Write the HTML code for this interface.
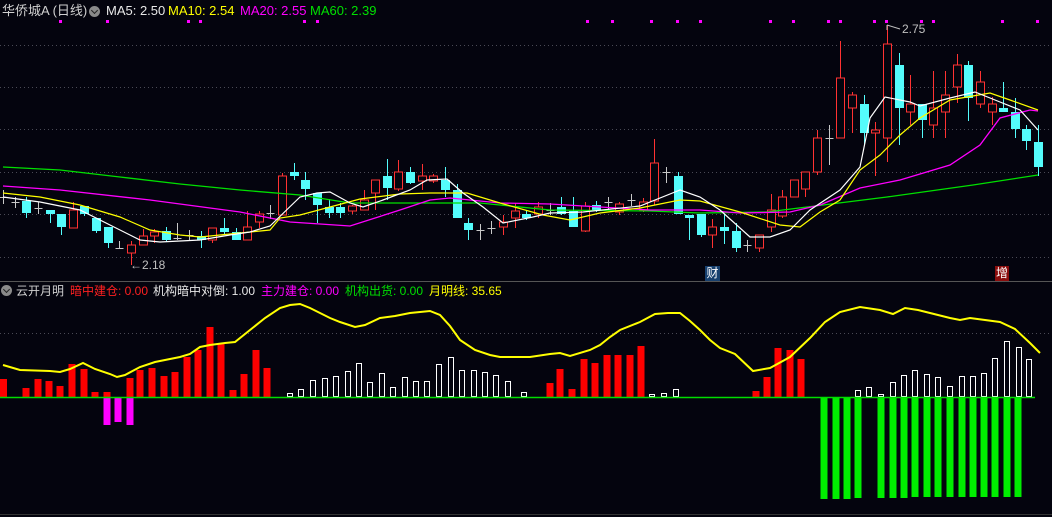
<!DOCTYPE html>
<html><head><meta charset="utf-8">
<style>
html,body{margin:0;padding:0;background:#04040e;}
body{width:1052px;height:517px;overflow:hidden;position:relative;font-family:"Liberation Sans","Noto Sans CJK SC",sans-serif;}
svg{position:absolute;left:0;top:0;}
.t{position:absolute;white-space:nowrap;font-size:13px;line-height:16px;}
.ic{position:absolute;width:11px;height:11px;border-radius:50%;background:#8a8a8a;}
.ic:after{content:"";position:absolute;left:3px;top:2px;width:4px;height:4px;border-right:1.5px solid #222;border-bottom:1.5px solid #222;transform:rotate(45deg);}
</style></head><body>
<svg id="s" width="1052" height="517" xmlns="http://www.w3.org/2000/svg"></svg>
<div class="t" style="left:2px;top:3px;color:#d0d0d0">华侨城A (日线)</div>
<div class="ic" style="left:89px;top:6px"></div>
<div class="t" style="left:106px;top:3px;color:#e8e8e8">MA5: 2.50</div>
<div class="t" style="left:168px;top:3px;color:#ffff00">MA10: 2.54</div>
<div class="t" style="left:240px;top:3px;color:#ff00ff">MA20: 2.55</div>
<div class="t" style="left:310px;top:3px;color:#00e000">MA60: 2.39</div>

<div class="ic" style="left:1px;top:285px"></div>
<div class="t" style="left:16px;top:283px;font-size:12px;color:#d0d0d0">云开月明</div>
<div class="t" style="left:70px;top:283px;font-size:12px;color:#ff2020">暗中建仓: 0.00</div>
<div class="t" style="left:153px;top:283px;font-size:12px;color:#e8e8e8">机构暗中对倒: 1.00</div>
<div class="t" style="left:261px;top:283px;font-size:12px;color:#ff00ff">主力建仓: 0.00</div>
<div class="t" style="left:345px;top:283px;font-size:12px;color:#00e000">机构出货: 0.00</div>
<div class="t" style="left:429px;top:283px;font-size:12px;color:#ffff00">月明线: 35.65</div>

<div class="t" style="left:130px;top:257px;font-size:12px;color:#c0c0c0">←2.18</div>
<div class="t" style="left:902px;top:21px;font-size:12px;color:#c0c0c0">2.75</div>
<div class="t" style="left:705px;top:266px;width:15px;height:15px;font-size:12px;line-height:15px;text-align:center;background:#17406e;color:#fff">财</div>
<div class="t" style="left:995px;top:266px;width:14px;height:15px;font-size:12px;line-height:15px;text-align:center;background:#8a0d0d;color:#fff">增</div>
<script>
var s=document.getElementById('s'),h='';
function ln(x1,y1,x2,y2,c,w,d){h+='<line x1="'+x1+'" y1="'+y1+'" x2="'+x2+'" y2="'+y2+'" stroke="'+c+'" stroke-width="'+(w||1)+'"'+(d?' stroke-dasharray="'+d+'"':'')+'/>';}
function rc(x,y,w,hh,f,st){h+='<rect x="'+x+'" y="'+y+'" width="'+w+'" height="'+hh+'" fill="'+f+'"'+(st?' stroke="'+st+'" stroke-width="1"':'')+'/>';}
function pl(p,c,w){h+='<polyline fill="none" stroke="'+c+'" stroke-width="'+(w||1)+'" points="'+p+'"/>';}
[45,87,129,172,214,257,333].forEach(function(y){ln(0,y+.5,1052,y+.5,'#4a4a55',1,'1 3');});
ln(0,281.5,1052,281.5,'#555',1);
ln(0,514.5,1052,514.5,'#333',1);
[60,107,188,200,304,317,587,612,651,677,700,770,793,828,840,874,886,921,933,1002,1037].forEach(function(x){rc(x-1,20,3,3,'#ff00ff');});
var C=[['g',197,197,190,204],['g',202,202,197,208],['c',201,213,197,218],['g',208,208,202,214],['c',210,214,210,223],['c',214,227,214,235],['r',210,228,202,228],['c',206,214,206,216],['c',218,231,218,233],['c',227,243,227,248],['g',248,248,241,248],['r',245,253,241,265],['r',236,245,229,245],['r',232,236,229,243],['c',231,240,227,242],['g',238,238,223,240],['g',235,235,230,240],['c',236,240,231,248],['r',228,240,228,243],['c',228,232,218,235],['c',232,240,228,240],['r',227,240,211,240],['r',214,222,211,228],['g',213,213,205,219],['r',176,215,173,215],['c',172,176,163,180],['c',180,189,172,200],['c',193,205,193,223],['c',207,213,199,218],['c',207,213,203,218],['r',206,211,205,214],['r',200,210,190,210],['r',180,193,180,210],['c',176,188,159,200],['r',172,189,160,191],['c',172,183,167,184],['r',176,181,164,190],['r',176,181,174,183],['c',180,190,167,197],['c',190,218,184,218],['c',223,230,218,240],['g',230,230,224,240],['g',228,228,221,234],['r',222,227,215,235],['r',211,218,203,228],['c',214,218,210,220],['r',207,214,202,218],['g',210,210,203,215],['c',207,214,197,215],['c',211,227,197,227],['r',206,231,202,232],['c',205,210,201,212],['g',202,202,197,210],['r',204,212,202,215],['g',200,200,194,206],['r',202,210,198,212],['r',163,201,139,205],['g',172,172,167,183],['c',176,214,172,214],['c',215,218,215,240],['c',214,235,214,237],['r',227,235,219,248],['c',227,231,214,244],['c',231,248,223,252],['g',245,245,240,252],['r',235,248,235,252],['r',210,227,194,232],['r',197,216,190,218],['r',180,197,180,197],['r',172,189,172,197],['r',138,172,130,175],['g',138,138,125,165],['r',78,138,41,138],['r',95,108,92,133],['c',104,133,95,145],['r',130,133,122,176],['r',44,138,25,162],['c',65,108,53,145],['r',104,112,75,125],['c',104,120,104,138],['r',108,125,71,138],['r',95,112,71,138],['r',65,87,54,103],['c',65,98,61,121],['r',82,104,71,108],['r',104,112,97,125],['c',108,112,82,112],['c',112,129,98,138],['c',129,141,125,150],['c',142,167,125,176]];
C.forEach(function(c,i){var x=Math.round(3+i*11.63)+.5;
 if(c[0]=='g'){ln(x,c[3],x,c[4],'#c8c8c8');ln(x-4,c[1]+.5,x+4,c[1]+.5,'#c8c8c8');}
 else if(c[0]=='r'){ln(x,c[3],x,c[1],'#ff3232');ln(x,c[2],x,c[4],'#ff3232');rc(x-4,c[1],8,Math.max(c[2]-c[1],1),'#04040e','#ff3232');}
 else{ln(x,c[3],x,c[4],'#54fcfc');rc(x-4.5,c[1],9,Math.max(c[2]-c[1],2),'#54fcfc');}
});
pl('3,167 60,170 120,177 180,184 240,190 300,195 350,203 450,203 480,203 550,210 650,211 700,213 767,212 807,207 887,197 973,185 1038,175','#00e000',1.3);
pl('3,186 60,190 150,200 240,212 290,222 350,226 400,210 430,200 450,198 500,203 550,204 600,207 650,210 700,210 740,213 790,212 820,205 860,188 900,180 950,165 980,145 1000,118 1030,110 1038,111','#ff00ff',1.3);
pl('3,193 40,197 80,205 120,217 150,230 180,235 200,237 240,233 270,230 280,218 300,215 330,207 360,199 400,194 430,193 467,193 500,203 543,215 570,220 600,213 640,208 680,200 700,201 740,212 780,225 800,227 820,212 840,200 860,170 880,155 900,135 920,118 950,100 990,93 1010,100 1038,110','#ffff00',1.2);
pl('3,197 40,202 80,210 110,225 140,240 160,242 200,240 230,235 250,232 270,226 300,197 317,193 330,192 350,203 363,207 383,200 410,190 427,180 447,179 463,193 483,207 503,223 533,217 550,213 583,212 640,206 680,190 700,197 720,210 750,237 770,237 790,230 810,210 840,190 860,167 870,118 885,97 910,102 920,106 950,98 975,92 1000,102 1020,110 1038,130','#ffffff',1.2);
ln(887,25,887,30,'#c0c0c0');ln(887,25,900,29,'#c0c0c0');
var R=[[3.5,379],[26,388],[38,379],[49,381],[60,386],[72,364],[84,369],[95,392],[107,392],[130,378],[140,370],[152,368],[164,376],[175,372],[187,357],[198,350],[210,327],[221,344],[233,390],[244,374],[256,350],[267,368],[550,383],[560,369],[572,389],[584,359],[595,363],[607,355],[618,355],[630,355],[641,346],[756,391],[767,377],[778,348],[790,350],[801,359]];
R.forEach(function(b){rc(b[0]-3.5,b[1],7,397-b[1],'#ff0000');});
[[107,425],[118,422],[130,425]].forEach(function(b){rc(b[0]-3.5,398,7,b[1]-398,'#ff00ff');});
[824,836,847,858,881,893,904,915,927,938,950,962,973,984,995,1007,1018].forEach(function(x,i){rc(x-3.5,398,7,i<3?101:(i<7?100:99),'#00ee00');});
[[290,393],[301,389],[313,380],[325,378],[336,376],[348,371],[359,363],[370,382],[382,373],[393,387],[405,377],[416,381],[427,381],[439,364],[451,357],[462,370],[474,370],[485,372],[496,375],[508,381],[524,392],[652,394],[664,393],[676,389],[858,390],[869,387],[881,394],[893,382],[904,375],[915,370],[927,374],[938,377],[950,386],[962,376],[973,376],[984,373],[995,358],[1007,341],[1019,347],[1029,359]].forEach(function(b){rc(b[0]-2.5,b[1]+.5,5,396-b[1],'none','#ffffff');});
ln(0,397.5,1035,397.5,'#00dd00',1.5);
pl('3,365 20,370 50,371 60,372 70,369 83,363 95,369 110,374 117,377 125,375 140,367 155,362 165,360 180,357 190,354 200,347 210,345 225,343 235,342 250,330 265,318 280,308 290,305 300,304 310,308 330,318 340,322 355,327 365,325 380,318 395,316 410,313 430,311 440,315 450,326 460,340 475,350 490,355 500,357 530,357 550,354 560,353 570,356 590,350 600,345 610,337 620,330 640,322 655,314 668,313 680,313 690,321 700,330 710,340 720,348 735,354 753,371 770,368 790,357 810,338 825,322 840,312 860,307 880,310 893,314 905,308 918,310 930,313 950,318 960,320 970,318 985,320 1000,322 1015,329 1030,343 1040,353','#ffff00',2);
s.innerHTML=h;
</script>
</body></html>
